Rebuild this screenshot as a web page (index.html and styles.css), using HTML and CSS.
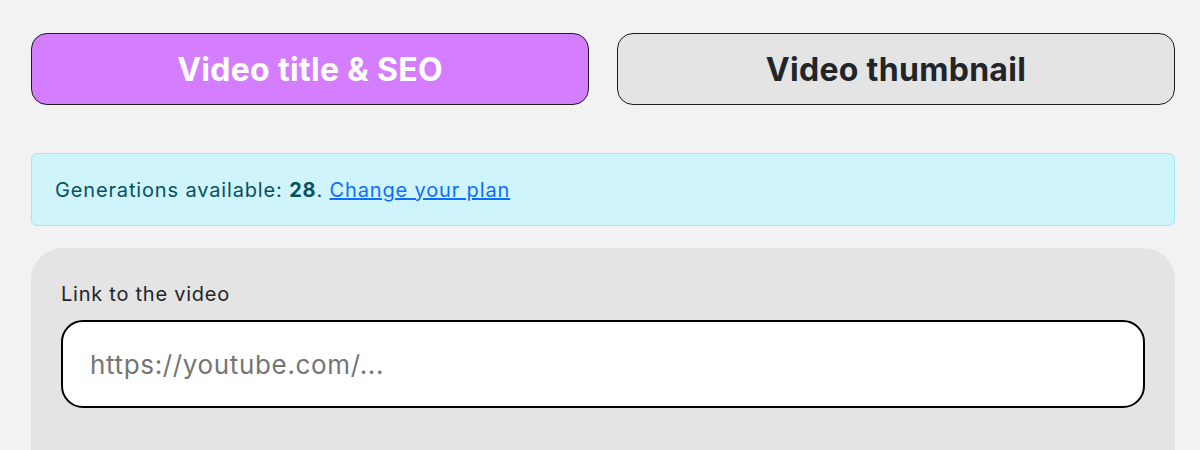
FILE: index.html
```html
<!DOCTYPE html>
<html lang="en">
<head>
<meta charset="utf-8">
<title>Video tools</title>
<link rel="stylesheet" href="styles.css">
</head>
<body>
<div class="page">
  <div class="tabs">
    <button class="tab tab-active" type="button">Video title &amp; SEO</button>
    <button class="tab" type="button">Video thumbnail</button>
  </div>
  <div class="alert">
    <span>Generations available: <strong>28</strong>. <a href="#" class="alert-link">Change your plan</a></span>
  </div>
  <div class="card">
    <label class="field-label" for="video-link">Link to the video</label>
    <input class="field-input" id="video-link" type="text" placeholder="https://youtube.com/...">
  </div>
</div>
</body>
</html>
```
FILE: styles.css
```css
* { box-sizing: border-box; }
html, body { margin: 0; padding: 0; }
body {
  background: #f2f2f2;
  font-family: Inter, "Liberation Sans", sans-serif;
  color: #212529;
  overflow: hidden;
}
.page {
  padding: 33px 25px 0 31px;
}
.tabs {
  display: grid;
  grid-template-columns: 1fr 1fr;
  gap: 28px;
}
.tab {
  height: 72px;
  border: 1px solid #1e1e1e;
  border-radius: 16px;
  background: #e4e4e4;
  color: #212529;
  font-family: Inter, "Liberation Sans", sans-serif;
  font-size: 32px;
  font-weight: 700;
  letter-spacing: 0.3px;
  cursor: pointer;
}
.tab-active {
  background: #d47dff;
  color: #ffffff;
}
.alert {
  margin-top: 48px;
  height: 73px;
  padding: 0 23px;
  display: flex;
  align-items: center;
  background: #cff4fc;
  border: 1px solid #9eeaf9;
  border-radius: 6px;
  color: #055160;
  font-size: 20px;
  letter-spacing: 0.85px;
}
.alert strong { font-weight: 700; }
.alert-link {
  color: #0d6efd;
  text-decoration: underline;
}
.card {
  margin-top: 22px;
  background: #e4e4e4;
  border-radius: 32px;
  padding: 32px 30px 60px;
  height: 260px;
}
.field-label {
  display: block;
  font-size: 20px;
  letter-spacing: 0.75px;
  color: #212529;
  line-height: 28px;
  margin-bottom: 12px;
}
.field-input {
  display: block;
  width: 100%;
  height: 88px;
  border: 2px solid #000;
  border-radius: 22px;
  background: #fff;
  padding: 0 27px;
  font-family: Inter, "Liberation Sans", sans-serif;
  font-size: 26px;
  letter-spacing: 0.65px;
  color: #212529;
  outline: none;
}
.field-input::placeholder { color: #757575; }
```
